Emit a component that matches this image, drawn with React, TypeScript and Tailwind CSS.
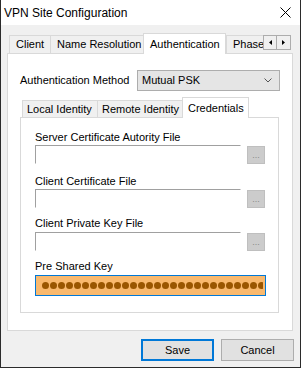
import React from "react";

const font = { fontFamily: '"Liberation Sans", Arial, sans-serif' };

function TopTab({ label, width, selected }: { label: string; width: string; selected?: boolean }) {
  return (
    <div
      className={`${width} flex items-center pl-[6px] border-l border-t border-[#d9d9d9] whitespace-nowrap overflow-hidden ${
        selected ? "h-[21px] -mb-px bg-white border-r relative z-10" : "h-[18px] bg-[#f0f0f0]"
      }`}
    >
      {label}
    </div>
  );
}

function InnerTab({ label, width, selected }: { label: string; width: string; selected?: boolean }) {
  return (
    <div
      className={`${width} flex items-center pl-[4px] border-l border-t border-[#d9d9d9] whitespace-nowrap ${
        selected ? "h-[21px] -mb-px bg-white border-r relative z-10 pl-[5px]" : "h-[17px] bg-[#f0f0f0]"
      }`}
    >
      {label}
    </div>
  );
}

function FileRow() {
  return (
    <div className="flex">
      <div className="w-[206px] h-[19px] bg-white border border-t-[#a0a0a0] border-l-[#a0a0a0] border-r-white border-b-white"></div>
      <div className="ml-[6px] mt-[1px] w-[18px] h-[18px] bg-[#cccccc] border border-[#bfbfbf] flex items-center justify-center text-[9px] text-[#8a8a8a] leading-none">
        ...
      </div>
    </div>
  );
}

export default function App() {
  return (
    <div
      className="w-[301px] h-[368px] flex flex-col bg-[#f0f0f0] border-x border-b border-[#2b2b2b] text-[11px] text-black"
      style={font}
    >
      {/* Title bar */}
      <div className="h-[25px] bg-white flex items-center pl-[3px]">
        <span className="text-[12px]">VPN Site Configuration</span>
        <svg className="ml-auto mr-[9px]" width="11" height="11" viewBox="0 0 11 11">
          <path d="M0.5 0.5 L10.5 10.5 M10.5 0.5 L0.5 10.5" stroke="#000" strokeWidth="1" />
        </svg>
      </div>

      {/* Body */}
      <div className="pt-[8px] pl-[6px]">
        {/* Top tab strip */}
        <div className="flex items-end pl-[2px] w-[286px]">
          <TopTab label="Client" width="w-[41px]" />
          <TopTab label="Name Resolution" width="w-[93px]" />
          <TopTab label="Authentication" width="w-[83px]" selected />
          <TopTab label="Phase" width="w-[37px]" />
          <div className="flex mb-[3px]">
            <div className="w-[14px] h-[15px] bg-[#f0f0f0] border border-[#adadad] flex items-center justify-center">
              <svg width="3" height="5" viewBox="0 0 3 5">
                <path d="M3 0 L0 2.5 L3 5 Z" fill="#000" />
              </svg>
            </div>
            <div className="w-[14px] h-[15px] bg-[#f0f0f0] border border-l-0 border-[#adadad] flex items-center justify-center">
              <svg width="3" height="5" viewBox="0 0 3 5">
                <path d="M0 0 L3 2.5 L0 5 Z" fill="#000" />
              </svg>
            </div>
          </div>
        </div>

        {/* Tab panel */}
        <div className="w-[286px] h-[278px] bg-white border border-[#d9d9d9] pt-[16px] pl-[12px]">
          <div className="flex items-center">
            <div className="w-[117px]">Authentication Method</div>
            <div className="w-[143px] h-[21px] bg-[#e5e5e5] border border-[#adadad] flex items-center pl-[4px]">
              <span>Mutual PSK</span>
              <svg className="ml-auto mr-[7px]" width="8" height="5" viewBox="0 0 8 5">
                <path d="M0.5 0.5 L4 4 L7.5 0.5" stroke="#555" strokeWidth="1" fill="none" />
              </svg>
            </div>
          </div>

          {/* Inner tabs */}
          <div className="flex items-end mt-[6px] pl-[2px]">
            <InnerTab label="Local Identity" width="w-[75px]" />
            <InnerTab label="Remote Identity" width="w-[85px]" />
            <InnerTab label="Credentials" width="w-[67px]" selected />
          </div>

          <div className="w-[259px] h-[196px] bg-white border border-[#d9d9d9] pt-[12px] pl-[14px] flex flex-col">
            <div className="h-[14px] leading-[14px]">Server Certificate Autority File</div>
            <div className="mt-[1px]">
              <FileRow />
            </div>
            <div className="h-[14px] leading-[14px] mt-[10px]">Client Certificate File</div>
            <div className="mt-[1px]">
              <FileRow />
            </div>
            <div className="h-[14px] leading-[14px] mt-[8px]">Client Private Key File</div>
            <div className="mt-[2px]">
              <FileRow />
            </div>
            <div className="h-[14px] leading-[14px] mt-[8px]">Pre Shared Key</div>
            <div className="mt-[2px] w-[231px] h-[21px] bg-[#f9b96e] border border-[#0078d7] flex items-center pl-[6px] pr-[2px] overflow-hidden">
              <div className="flex gap-[1px] overflow-hidden">
                {Array.from({ length: 32 }).map((_, i) => (
                  <div key={i} className="w-[7px] h-[7px] shrink-0 rounded-full bg-[#9a5600]"></div>
                ))}
              </div>
            </div>
          </div>
        </div>

        {/* Buttons */}
        <div className="flex justify-end gap-[7px] mt-[8px] pr-[6px]">
          <button className="w-[73px] h-[22px] bg-[#e1e1e1] border-2 border-[#0078d7] flex items-center justify-center">
            Save
          </button>
          <button className="w-[73px] h-[22px] bg-[#e1e1e1] border border-[#adadad] flex items-center justify-center">
            Cancel
          </button>
        </div>
      </div>
    </div>
  );
}
